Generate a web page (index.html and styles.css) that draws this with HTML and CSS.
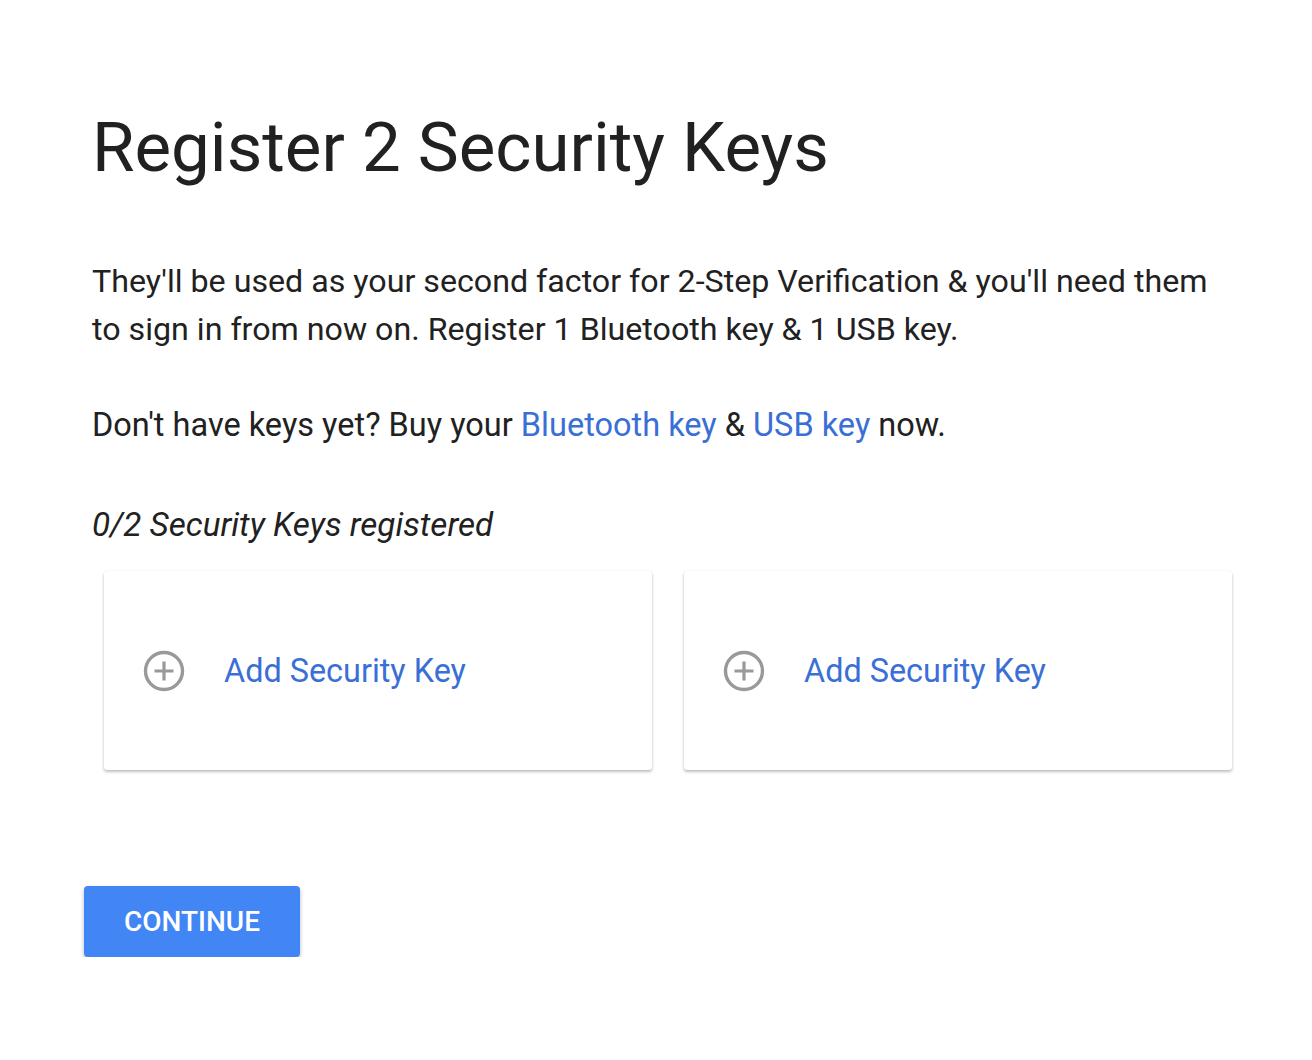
FILE: index.html
```html
<!DOCTYPE html>
<html lang="en">
<head>
    <meta charset="UTF-8">
    <meta name="viewport" content="width=device-width, initial-scale=1.0">
    <title>Register 2 Security Keys</title>
    <link rel="stylesheet" href="styles.css">
</head>
<body>
    <div class="page">
        <h1>Register 2 Security Keys</h1>
        <p class="intro">They'll be used as your second factor for 2-Step Verification &amp; you'll need them to sign in from now on. Register 1 Bluetooth key &amp; 1 USB key.</p>
        <p class="buy">Don't have keys yet? Buy your <a href="#">Bluetooth key</a> &amp; <a href="#">USB key</a> now.</p>

        <p class="count">0/2 Security Keys registered</p>

        <div class="keys">
            <div class="key-card">
                <svg class="plus" width="42" height="42" viewBox="0 0 42 42">
                    <circle cx="21" cy="21" r="18.5" fill="none" stroke="#999" stroke-width="3.4"/>
                    <path d="M21 11.5v19M11.5 21h19" stroke="#999" stroke-width="3.2" fill="none"/>
                </svg>
                <span class="add">Add Security Key</span>
            </div>
            <div class="key-card">
                <svg class="plus" width="42" height="42" viewBox="0 0 42 42">
                    <circle cx="21" cy="21" r="18.5" fill="none" stroke="#999" stroke-width="3.4"/>
                    <path d="M21 11.5v19M11.5 21h19" stroke="#999" stroke-width="3.2" fill="none"/>
                </svg>
                <span class="add">Add Security Key</span>
            </div>
        </div>

        <button type="button">CONTINUE</button>
    </div>
</body>
</html>
```

FILE: styles.css
```css
body {
    margin: 0;
    background: #fff;
    font-family: Roboto, "Liberation Sans", sans-serif;
    color: #212121;
}
.page {
    padding: 108px 60px 0 92px;
}
h1 {
    margin: 0;
    font-size: 69px;
    font-weight: 400;
    line-height: 80px;
}
.intro {
    max-width: 1125px;
    margin: 69px 0 0;
    font-size: 32.2px;
    line-height: 48px;
}
.buy {
    margin: 48px 0 0;
    font-size: 32.5px;
    line-height: 48px;
}
a {
    color: #3a6fd6;
    text-decoration: none;
}
.count {
    margin: 52px 0 0;
    font-size: 33.2px;
    font-style: italic;
    line-height: 48px;
}
.keys {
    display: flex;
    gap: 32px;
    margin: 22px 0 0 12px;
}
.key-card {
    width: 548px;
    height: 199px;
    display: flex;
    align-items: center;
    padding-left: 39px;
    box-sizing: border-box;
    background: #fff;
    border-radius: 3px;
    box-shadow: 0 2px 3px rgba(0, 0, 0, 0.24), 0 0 2px rgba(0, 0, 0, 0.08);
}
.plus {
    flex: none;
    margin-right: 39px;
}
.add {
    font-size: 32.4px;
    color: #3a6fd6;
}
button {
    display: block;
    margin: 116px 0 0 -8px;
    width: 216px;
    height: 71px;
    background: #4285f4;
    color: #fff;
    font-family: Roboto, "Liberation Sans", sans-serif;
    font-size: 28px;
    font-weight: 500;
    border: none;
    border-radius: 4px;
    box-shadow: 0 2px 4px rgba(0, 0, 0, 0.28);
    cursor: pointer;
}
```
